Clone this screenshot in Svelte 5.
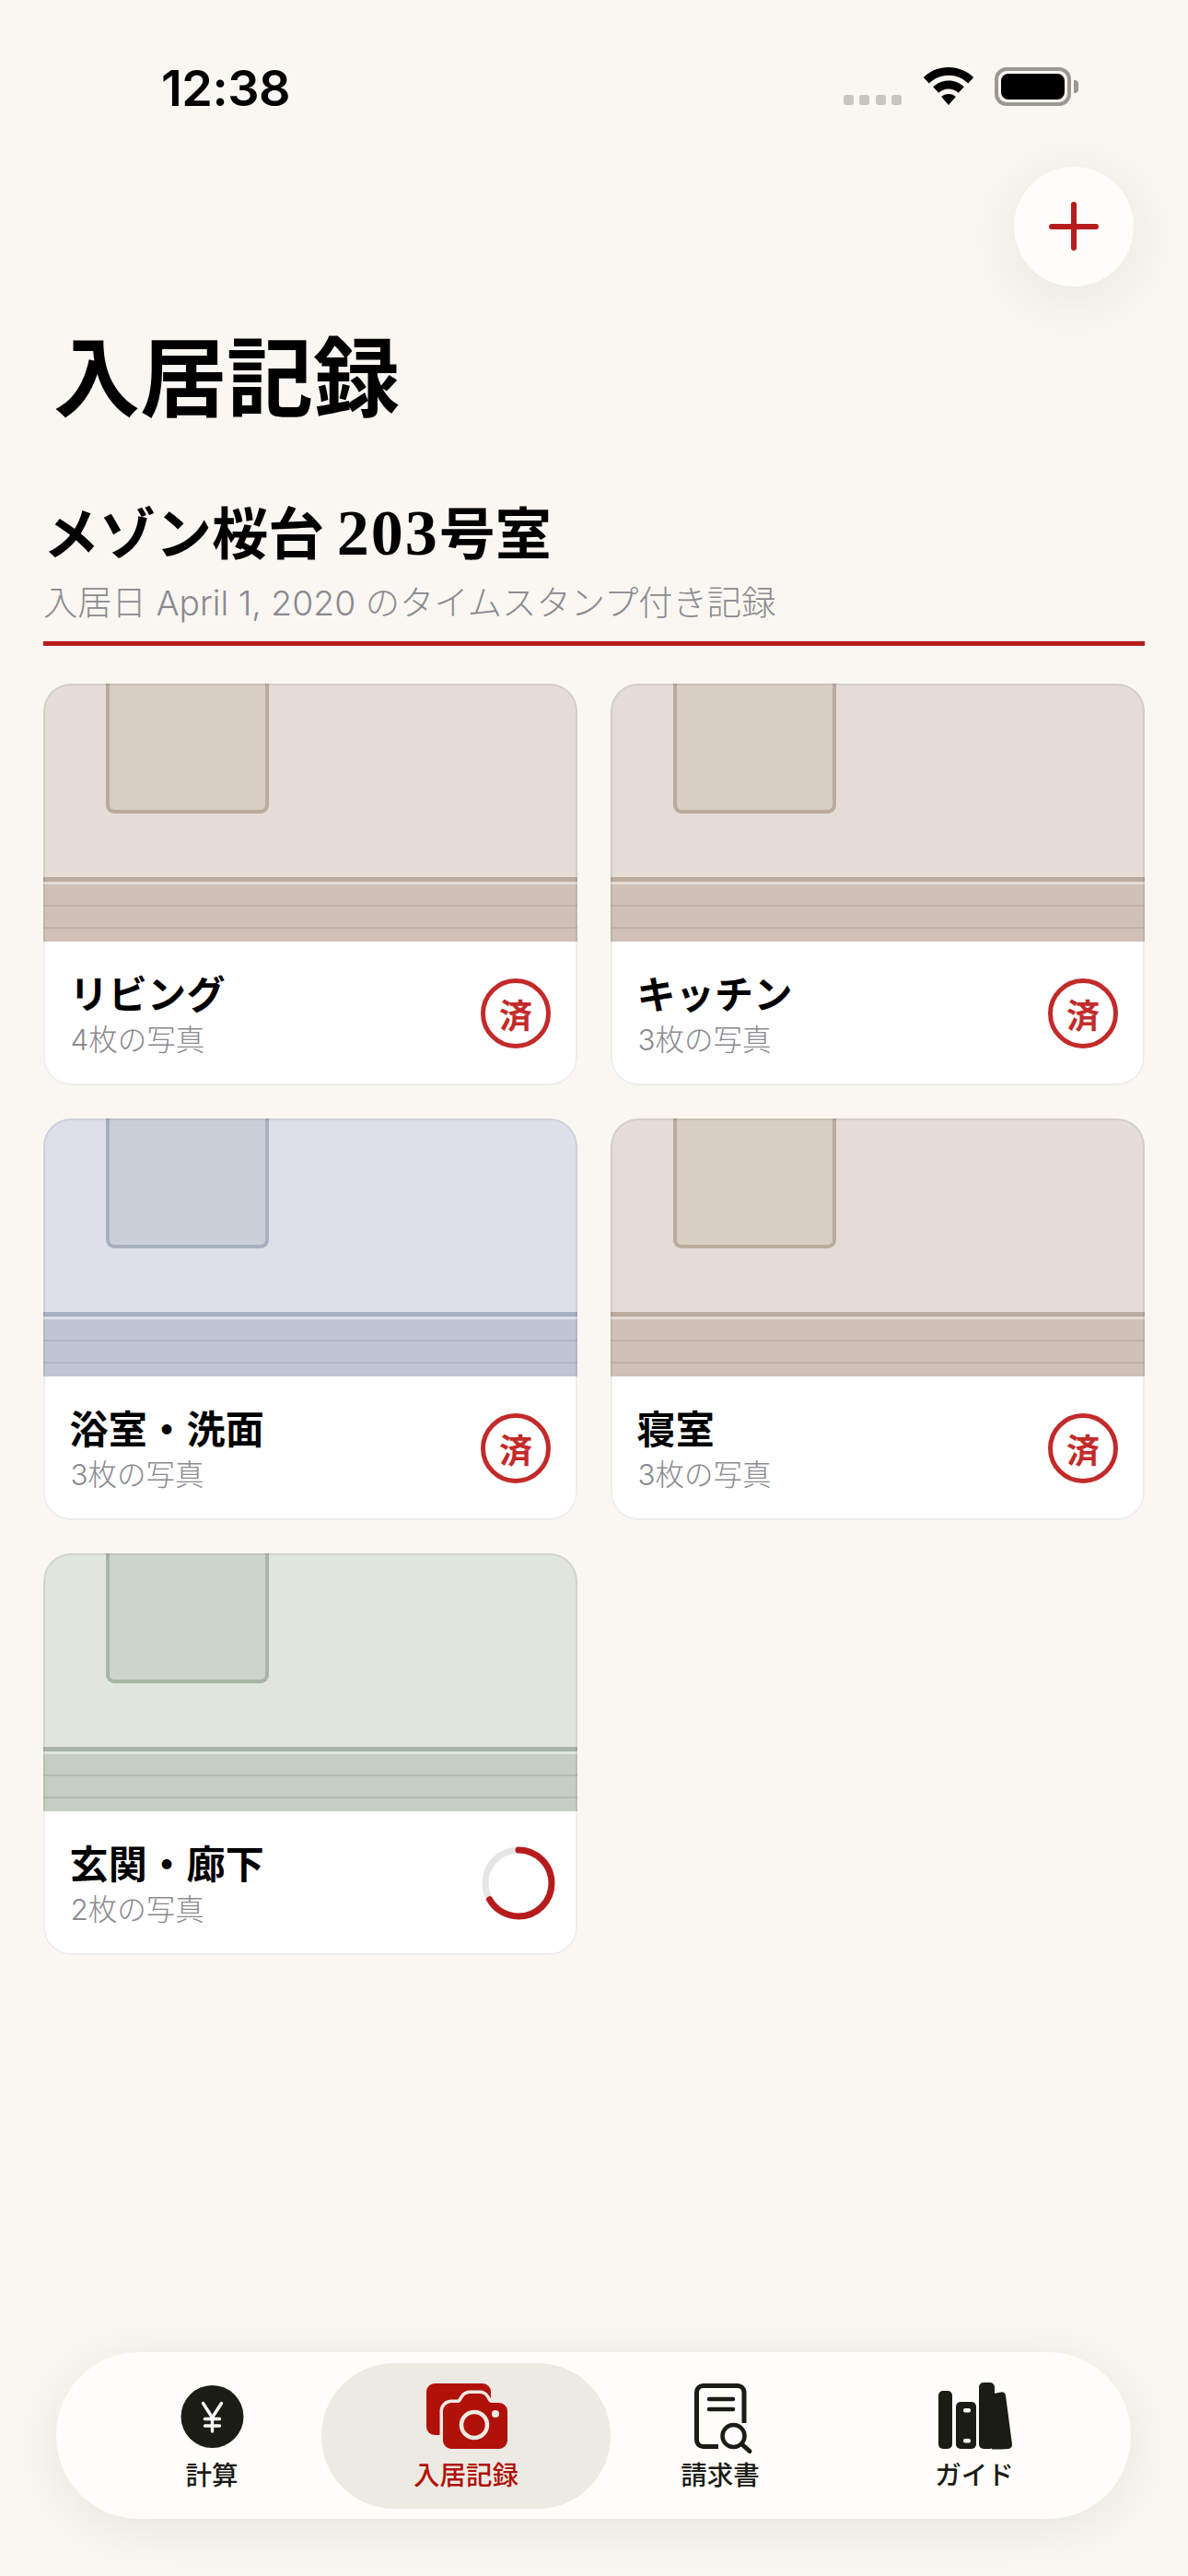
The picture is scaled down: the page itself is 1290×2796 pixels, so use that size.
<script>
  const rooms = [
    { name: 'リビング', count: '4枚の写真', tone: 'warm', done: true },
    { name: 'キッチン', count: '3枚の写真', tone: 'warm', done: true },
    { name: '浴室・洗面', count: '3枚の写真', tone: 'blue', done: true },
    { name: '寝室', count: '3枚の写真', tone: 'warm', done: true },
    { name: '玄関・廊下', count: '2枚の写真', tone: 'green', done: false }
  ];
  const r = 36;
  const circ = 2 * Math.PI * r;
</script>

<div class="screen">
  <header class="status">
    <span class="time">12:38</span>
    <div class="indicators">
      <div class="dots"><i></i><i></i><i></i><i></i></div>
      <svg class="wifi" width="56" height="42" viewBox="0 0 56 42" aria-hidden="true">
        <path d="M28 0C17.500 0 8 4 .8 11l6 6.600C12.400 12 19.800 8.800 28 8.800s15.600 3.200 21.200 8.800l6-6.600C48 4 38.500 0 28 0Z" fill="#000"/>
        <path d="M28 14.500c-6.500 0-12.400 2.600-16.800 6.800l6 6.500c2.800-2.700 6.600-4.300 10.800-4.300s8 1.600 10.800 4.300l6-6.500C40.400 17.100 34.500 14.500 28 14.500Z" fill="#000"/>
        <path d="M28 29c-3 0-5.800 1.200-7.800 3.100L28 41l7.800-8.900C33.800 30.200 31 29 28 29Z" fill="#000"/>
      </svg>
      <div class="battery"><div class="charge"></div></div>
      <div class="cap"></div>
    </div>
  </header>

  <button class="fab" aria-label="追加">
    <svg width="54" height="54" viewBox="0 0 54 54"><path d="M27 3v47M3 27h48" stroke="#b71c1c" stroke-width="6" stroke-linecap="round" fill="none"/></svg>
  </button>

  <h1>入居記録</h1>

  <section class="heading">
    <h2>メゾン桜台 <span class="num">203</span>号室</h2>
    <p>入居日 April 1, 2020 のタイムスタンプ付き記録</p>
  </section>

  <div class="grid">
    {#each rooms as room}
      <article class="card {room.tone}">
        <div class="scene">
          <div class="wall"><div class="window"></div></div>
          <div class="base"></div>
          <div class="shine"></div>
          <div class="floor"></div>
        </div>
        <div class="info">
          <div class="labels">
            <div class="name">{room.name}</div>
            <div class="count">{room.count}</div>
          </div>
          {#if room.done}
            <div class="stamp">済</div>
          {:else}
            <svg class="ring" width="80" height="80" viewBox="0 0 80 80" aria-hidden="true">
              <circle cx="40" cy="40" r={r} fill="none" stroke="#e6e6e6" stroke-width="7"/>
              <circle cx="40" cy="40" r={r} fill="none" stroke="#b71c1c" stroke-width="7" stroke-linecap="round"
                stroke-dasharray="{circ * 0.667} {circ}" transform="rotate(-90 40 40)"/>
            </svg>
          {/if}
        </div>
      </article>
    {/each}
  </div>

  <nav class="tabs">
    <div class="tab">
      <svg width="70" height="76" viewBox="0 0 70 76" aria-hidden="true">
        <circle cx="35.500" cy="38" r="34" fill="#1c1c17"/>
        <path d="M25.500 23.500 35.500 39 45.500 23.500M35.500 39v15M27.500 40.500h16M27.500 48h16" stroke="#fefdf9" stroke-width="3.400" fill="none" stroke-linecap="round" stroke-linejoin="round"/>
      </svg>
      <span>計算</span>
    </div>
    <div class="tab active">
      <svg width="90" height="75" viewBox="-2 0 90 75" aria-hidden="true">
        <rect x="0" y="1" width="70" height="56" rx="9" fill="#b01109"/>
        <path d="M27 22H34C37 22 38 19 40 16C42 13 45 12 47 12H58C61 12 63 13 65 16C67 19 68 22 71 22H79a9 9 0 0 1 9 9V63a9 9 0 0 1-9 9H27a9 9 0 0 1-9-9V31a9 9 0 0 1 9-9Z" fill="#b01109" stroke="#edeae4" stroke-width="7" paint-order="stroke"/>
        <circle cx="52" cy="46" r="14" fill="none" stroke="#edeae4" stroke-width="4.500"/>
        <circle cx="75" cy="34" r="4" fill="#edeae4"/>
      </svg>
      <span>入居記録</span>
    </div>
    <div class="tab">
      <svg width="70" height="78" viewBox="0 0 70 78" aria-hidden="true" overflow="visible">
        <path d="M61 47V13.500a7 7 0 0 0-7-7H16.500a7 7 0 0 0-7 7V65.500a7 7 0 0 0 7 7H33" fill="none" stroke="#1c1c17" stroke-width="5"/>
        <path d="M23 21h26M23 32h26" stroke="#1c1c17" stroke-width="4.500" stroke-linecap="round"/>
        <circle cx="49.500" cy="61" r="12" fill="none" stroke="#1c1c17" stroke-width="4.500"/>
        <path d="M58.500 70l8.500 7.500" stroke="#1c1c17" stroke-width="5" stroke-linecap="round"/>
      </svg>
      <span>請求書</span>
    </div>
    <div class="tab">
      <svg width="82" height="75" viewBox="0 -1 82 75" aria-hidden="true">
        <rect x="2" y="8" width="15" height="63" rx="5" fill="#1c1c17"/>
        <rect x="21" y="20" width="22" height="51" rx="5" fill="#1c1c17"/>
        <rect x="29" y="27" width="8" height="4.500" rx="2" fill="#fefdf9"/>
        <rect x="29" y="60" width="8" height="4.500" rx="2" fill="#fefdf9"/>
        <rect x="46" y="-1" width="17" height="72" rx="5" fill="#1c1c17"/>
        <path d="M62 11l8-1.500a4 4 0 0 1 5 3.500L82 66a4.500 4.500 0 0 1-4 5L70 71.500H60Z" fill="#1c1c17"/>
      </svg>
      <span>ガイド</span>
    </div>
  </nav>
</div>

<style>
  :global(body) { margin: 0; background: #faf7f2; }
  .screen {
    position: relative;
    width: 1290px;
    height: 2796px;
    display: flex;
    flex-direction: column;
    overflow: hidden;
    background: #faf7f2;
    color: #000;
    font-family: "Noto Sans CJK JP", sans-serif;
  }
  .status {
    height: 142px;
    flex: none;
    box-sizing: border-box;
    display: flex;
    justify-content: space-between;
    padding: 65px 119px 0 175px;
  }
  .time {
    font: 600 54px/62px Inter, sans-serif;
    letter-spacing: -0.5px;
  }
  .indicators { display: flex; align-items: flex-start; padding-top: 8px; }
  .dots { display: flex; gap: 6.500px; margin-top: 30px; margin-right: 23px; }
  .dots i { width: 11px; height: 11px; border-radius: 3px; background: #c6c5c0; }
  .wifi { margin-right: 22px; }
  .battery {
    width: 83px;
    height: 42px;
    box-sizing: border-box;
    border: 4px solid #999893;
    border-radius: 13px;
    padding: 3px;
  }
  .charge { height: 100%; background: #000; border-radius: 8px; }
  .cap { width: 5px; height: 14px; margin: 14px 0 0 3px; background: #999893; border-radius: 0 4px 4px 0; }

  .fab {
    position: absolute;
    left: 1101px;
    top: 181px;
    width: 130px;
    height: 130px;
    padding: 0;
    border: none;
    border-radius: 50%;
    background: #fefdf9;
    box-shadow: 0 12px 70px rgba(0, 0, 0, 0.08);
    display: flex;
    align-items: center;
    justify-content: center;
  }

  h1 {
    margin: 202px 0 0;
    padding-left: 58px;
    font: 700 94px/120px "Noto Sans CJK JP", sans-serif;
  }
  .heading { margin: 72px 47px 0; border-bottom: 5px solid #b71c1c; padding-bottom: 16px; }
  h2 {
    margin: 0;
    height: 80px;
    font: 700 61px/80px "Noto Sans CJK JP", sans-serif;
  }
  .num {
    font: 700 70px/1 "Liberation Serif", serif;
    letter-spacing: 2px;
  }
  .heading p {
    margin: 14px 0 0;
    font: 300 37.300px/50px Inter, "Noto Sans CJK JP", sans-serif;
    color: #8a8a8f;
  }
  .grid {
    margin: 41px 47px 0;
    display: grid;
    grid-template-columns: 580px 580px;
    gap: 36px;
  }
  .card {
    position: relative;
    height: 436px;
    border-radius: 30px;
    overflow: hidden;
    background: #fff;
    --wall: #e5dcd6;
    --frame: #d8cec4;
    --trim: #bcaa9c;
    --floor: #cfc1b7;
  }
  .card::after {
    content: "";
    position: absolute;
    inset: 0;
    border: 2px solid rgba(0, 0, 0, 0.07);
    border-radius: 30px;
    pointer-events: none;
  }
  .blue { --wall: #dde0e8; --frame: #cbcfda; --trim: #a9afc2; --floor: #bfc5d3; }
  .green { --wall: #e0e5dd; --frame: #cdd5cb; --trim: #a9b5a6; --floor: #c4cfc2; }
  .scene { height: 280px; display: flex; flex-direction: column; }
  .wall { height: 210px; background: var(--wall); }
  .window {
    width: 177px;
    height: 141px;
    margin-left: 67.500px;
    box-sizing: border-box;
    border: 4px solid var(--trim);
    border-top: none;
    border-radius: 0 0 9px 9px;
    background: var(--frame);
  }
  .base { height: 5px; background: var(--trim); }
  .shine { height: 3px; background: var(--wall); }
  .floor {
    height: 62px;
    background:
      repeating-linear-gradient(to bottom, transparent 0 22.500px, color-mix(in srgb, var(--trim) 65%, var(--floor)) 22.500px 24px),
      var(--floor);
  }
  .info {
    height: 156px;
    box-sizing: border-box;
    display: flex;
    align-items: center;
    justify-content: space-between;
    padding: 0 29px 0 29.500px;
  }
  .labels { margin-top: 3px; }
  .name { margin-left: -1px; font-size: 42px; line-height: 50px; font-weight: 700; letter-spacing: 0.3px; }
  .count { margin-top: 5px; font: 300 31.500px/44px Inter, "Noto Sans CJK JP", sans-serif; color: #8a8a8f; }
  .stamp {
    width: 76px;
    height: 76px;
    box-sizing: border-box;
    border: 5.500px solid #c32a2a;
    border-radius: 50%;
    color: #c32a2a;
    font-size: 36px;
    font-weight: 700;
    display: flex;
    align-items: center;
    justify-content: center;
  }
  .ring { margin-right: -5px; display: block; }

  .tabs {
    margin: auto 62px 62px 61px;
    height: 181px;
    box-sizing: border-box;
    padding: 12px 32px 11px 31px;
    border-radius: 90px;
    background: #fefdf9;
    box-shadow: 0 10px 60px rgba(0, 0, 0, 0.08);
    display: grid;
    grid-template-columns: repeat(4, 1fr);
  }
  .tab {
    height: 158px;
    box-sizing: border-box;
    display: flex;
    flex-direction: column;
    align-items: center;
    justify-content: flex-end;
    padding-bottom: 20px;
    color: #1c1c17;
    font-size: 28.500px;
    line-height: 36px;
    font-weight: 500;
  }
  .tab svg { display: block; margin-bottom: 6px; }
  .tab.active {
    margin: 0 -19px;
    border-radius: 79px;
    background: #edeae4;
    color: #b01109;
  }
</style>
